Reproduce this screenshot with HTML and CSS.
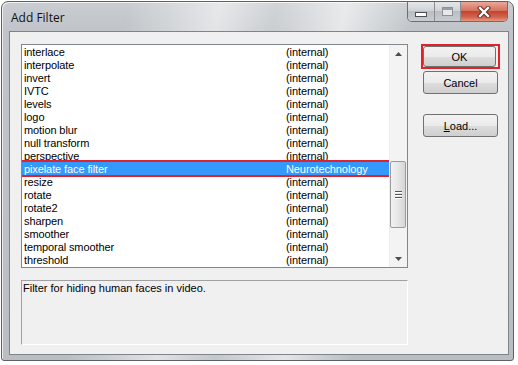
FILE: index.html
```html
<!DOCTYPE html>
<html lang="en">
    <head>
        <title>Add Filter</title>
        <link rel="stylesheet" href="styles.css">
    </head>
    <body>
        <div class="window">
            <!-- Title bar -->
            <div class="titlebar">
                <span class="title">Add Filter</span>
                <div class="caption-buttons">
                    <div class="cap cap-min"><span class="min-glyph"></span></div>
                    <div class="cap cap-max"><span class="max-glyph"></span></div>
                    <div class="cap cap-close">
                        <svg width="14" height="12" viewBox="0 0 14 12">
                            <path d="M3 2 L11 10 M11 2 L3 10" stroke="#5a2a22" stroke-width="4.2" stroke-linecap="square"/>
                            <path d="M3 2 L11 10 M11 2 L3 10" stroke="#ffffff" stroke-width="2.4" stroke-linecap="square"/>
                        </svg>
                    </div>
                </div>
            </div>

            <!-- Dialog body -->
            <div class="client">
                <div class="left-col">
                    <div class="listbox">
                        <div class="rows">
                            <div class="row"><span class="name">interlace</span><span class="src">(internal)</span></div>
                            <div class="row"><span class="name">interpolate</span><span class="src">(internal)</span></div>
                            <div class="row"><span class="name">invert</span><span class="src">(internal)</span></div>
                            <div class="row"><span class="name">IVTC</span><span class="src">(internal)</span></div>
                            <div class="row"><span class="name">levels</span><span class="src">(internal)</span></div>
                            <div class="row"><span class="name">logo</span><span class="src">(internal)</span></div>
                            <div class="row"><span class="name">motion blur</span><span class="src">(internal)</span></div>
                            <div class="row"><span class="name">null transform</span><span class="src">(internal)</span></div>
                            <div class="row"><span class="name">perspective</span><span class="src">(internal)</span></div>
                            <div class="row selected"><span class="name">pixelate face filter</span><span class="src">Neurotechnology</span></div>
                            <div class="row"><span class="name">resize</span><span class="src">(internal)</span></div>
                            <div class="row"><span class="name">rotate</span><span class="src">(internal)</span></div>
                            <div class="row"><span class="name">rotate2</span><span class="src">(internal)</span></div>
                            <div class="row"><span class="name">sharpen</span><span class="src">(internal)</span></div>
                            <div class="row"><span class="name">smoother</span><span class="src">(internal)</span></div>
                            <div class="row"><span class="name">temporal smoother</span><span class="src">(internal)</span></div>
                            <div class="row"><span class="name">threshold</span><span class="src">(internal)</span></div>
                        </div>
                        <div class="scrollbar">
                            <div class="arrow">
                                <svg width="7" height="4" viewBox="0 0 7 4"><path d="M0 4 L3.5 0 L7 4 Z" fill="#4d4d4d"/></svg>
                            </div>
                            <div class="track">
                                <div class="thumb">
                                    <span class="grip"></span>
                                    <span class="grip"></span>
                                    <span class="grip"></span>
                                </div>
                            </div>
                            <div class="arrow">
                                <svg width="7" height="4" viewBox="0 0 7 4"><path d="M0 0 L7 0 L3.5 4 Z" fill="#4d4d4d"/></svg>
                            </div>
                        </div>
                    </div>
                    <div class="description">Filter for hiding human faces in video.</div>
                </div>

                <div class="right-col">
                    <div class="ok-frame">
                        <button class="btn">OK</button>
                    </div>
                    <button class="btn">Cancel</button>
                    <button class="btn btn-load"><u>L</u>oad...</button>
                </div>
            </div>
        </div>
    </body>
</html>
```

FILE: styles.css
```css
/* Page */
body {
    margin: 0;
    background: #ffffff;
    font-family: "Liberation Sans", Arial, sans-serif;
    font-size: 11px;
    color: #000;
}

/* Window frame */
.window {
    margin: 1px 0 0 1px;
    width: 513px;
    height: 360px;
    box-sizing: border-box;
    border: 1px solid #5e6266;
    border-radius: 7px 7px 3px 3px;
    padding: 0 4px 5px 7px;
    display: flex;
    flex-direction: column;
    background:
        linear-gradient(100deg, rgba(255,255,255,0) 22%, rgba(255,255,255,0.55) 38%, rgba(255,255,255,0.15) 48%, rgba(255,255,255,0.6) 60%, rgba(255,255,255,0) 72%),
        linear-gradient(180deg, #c9cdd1 0, #c0c4c8 30px, #babec2 100%);
    box-shadow: inset 1px 1px 0 rgba(255,255,255,0.7);
}

.titlebar {
    height: 29px;
    display: flex;
    align-items: flex-start;
    justify-content: space-between;
}

.title {
    font-family: "Open Sans", "Noto Sans", sans-serif;
    font-size: 12px;
    margin: 7px 0 0 2px;
    color: #111;
}

/* Caption buttons */
.caption-buttons {
    display: flex;
    margin-right: 1px;
    border: 1px solid #6b6f74;
    border-top: none;
    border-radius: 0 0 5px 5px;
    overflow: hidden;
    height: 19px;
}

.cap {
    display: flex;
    align-items: center;
    justify-content: center;
    width: 26px;
    background: linear-gradient(180deg, #e4e7ea 0, #cfd3d8 45%, #b9bec4 50%, #c9cdd2 100%);
    border-right: 1px solid #8a8e93;
}

.cap-max {
    width: 25px;
}

.cap-close {
    width: 46px;
    border-right: none;
    background: linear-gradient(180deg, #e9a899 0, #d7725f 45%, #c2452f 50%, #d36450 80%, #e39a7f 100%);
}

.min-glyph {
    width: 10px;
    height: 3px;
    margin-top: 6px;
    background: #fdfdfd;
    border: 1px solid #4b4f54;
}

.max-glyph {
    width: 9px;
    height: 7px;
    border: 1px solid #8d9196;
    background: #e6e8ea;
    box-shadow: inset 0 2px 0 #9a9ea3;
}

/* Client area */
.client {
    flex: 1;
    display: flex;
    gap: 15px;
    background: #f0f0f0;
    border: 1px solid #7e8489;
    padding: 12px 0 0 11px;
}

.left-col {
    display: flex;
    flex-direction: column;
    gap: 12px;
}

/* List box */
.listbox {
    width: 387px;
    height: 224px;
    box-sizing: border-box;
    border: 1px solid #82878d;
    background: #fff;
    display: flex;
}

.rows {
    flex: 1;
    overflow: hidden;
}

.row {
    height: 13px;
    box-sizing: border-box;
    padding: 1px 0 0 2px;
    line-height: 12px;
    display: flex;
    white-space: nowrap;
    position: relative;
    letter-spacing: -0.1px;
}

.row .name {
    width: 262px;
}

.row.selected {
    background: #3399ff;
    color: #fff;
    outline: 2px solid #e0232a;
    z-index: 1;
}

/* Scroll bar */
.scrollbar {
    width: 17px;
    display: flex;
    flex-direction: column;
    background: #f3f3f3;
    border-left: 1px solid #ededed;
}

.arrow {
    height: 17px;
    display: flex;
    align-items: center;
    justify-content: center;
}

.track {
    flex: 1;
}

.thumb {
    margin: 99px 1px 0 0;
    height: 67px;
    box-sizing: border-box;
    border: 1px solid #9b9b9b;
    border-radius: 2px;
    background: linear-gradient(90deg, #f2f2f2 0, #e6e6e6 50%, #d6d6d6 100%);
    display: flex;
    flex-direction: column;
    align-items: center;
    justify-content: center;
    gap: 1px;
}

.grip {
    width: 7px;
    height: 1px;
    background: #555;
    border-bottom: 1px solid #fff;
}

/* Description */
.description {
    width: 387px;
    height: 65px;
    box-sizing: border-box;
    border-top: 1px solid #a0a0a0;
    border-left: 1px solid #a0a0a0;
    border-right: 1px solid #ffffff;
    border-bottom: 1px solid #ffffff;
    padding: 1px 1px;
}

/* Buttons */
.right-col {
    display: flex;
    flex-direction: column;
    padding-top: 1px;
}

.ok-frame {
    margin: -1px 0 2px -2px;
    width: 75px;
    border: 2px solid #e0232a;
    padding: 0;
    display: flex;
}

.ok-frame .btn {
    margin: 0;
    width: 73px;
    height: 21px;
}

.btn {
    width: 75px;
    height: 23px;
    margin-bottom: 3px;
    border: 1px solid #707070;
    border-radius: 3px;
    background: linear-gradient(180deg, #f2f2f2 0, #ebebeb 50%, #dddddd 51%, #cfcfcf 100%);
    font-family: "Liberation Sans", Arial, sans-serif;
    font-size: 11px;
    color: #000;
    padding: 0;
}

.btn-load {
    margin-top: 17px;
}
```
